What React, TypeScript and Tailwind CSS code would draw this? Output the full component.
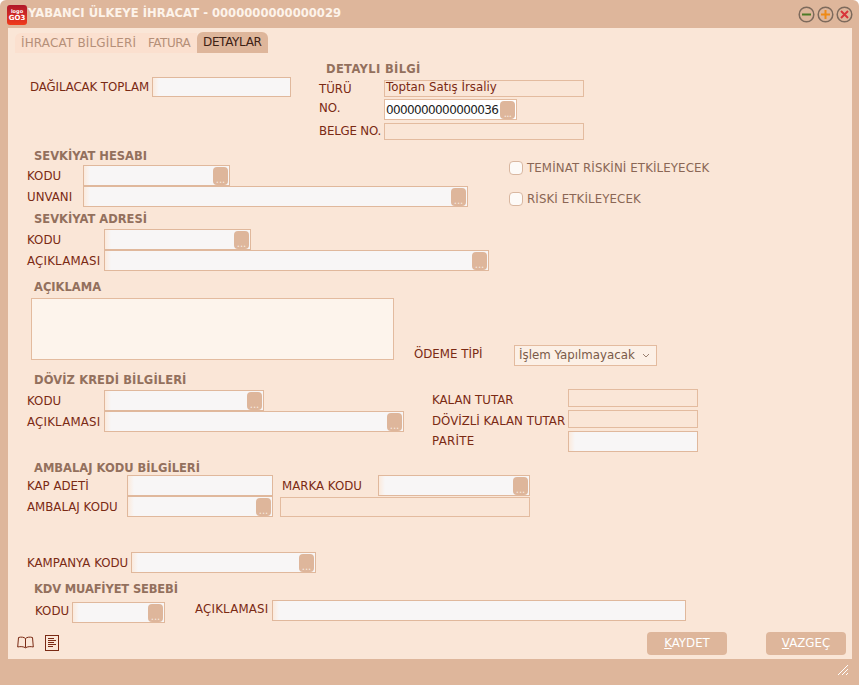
import React from "react";

const label = "text-[#7a2a14] text-[11.8px] leading-[14px] whitespace-nowrap";
const heading = "text-[#93705d] text-[11.5px] leading-[14px] font-bold whitespace-nowrap";
const roBox = "border border-[#e3bb9f] bg-[#fae6d7]";
const edBox = "border border-[#e0b89c] bg-[linear-gradient(to_right,#fbeadd,#f8f6f6_6px)]";

function Dots({ className = "" }: { className?: string }) {
  return (
    <span className={`flex w-[15px] h-[18px] items-end justify-center rounded-[4px] bg-[#deb69b] text-[#f8ebe0] text-[10px] leading-[11px] shrink-0 ${className}`}>
      ...
    </span>
  );
}

function Lookup({ className }: { className: string }) {
  return (
    <div className={`flex items-center justify-end pr-px ${edBox} ${className}`}>
      <Dots />
    </div>
  );
}

function Lbl({ children, className = "" }: { children: React.ReactNode; className?: string }) {
  return <span className={`${label} ${className}`}>{children}</span>;
}

function Head({ children, className = "" }: { children: React.ReactNode; className?: string }) {
  return <div className={`${heading} ${className}`}>{children}</div>;
}

function Check({ children, className = "" }: { children: React.ReactNode; className?: string }) {
  return (
    <div className={`flex items-center gap-[4px] h-[14px] ${className}`}>
      <span className="w-[14px] h-[14px] rounded-[4px] border border-[#d9b7a0] bg-[#fdfaf7]" />
      <Lbl className="text-[#8a6655] tracking-[0.1px]">{children}</Lbl>
    </div>
  );
}

function Circle({ color, kind }: { color: string; kind: "minus" | "plus" | "x" }) {
  return (
    <svg width="17" height="17" viewBox="0 0 17 17">
      <circle cx="8.5" cy="8.5" r="7.3" fill="#deb69b" stroke="#7d6a5c" strokeWidth="1.5" />
      {kind !== "x" && <path d="M4 8.5h9" stroke={color} strokeWidth="2" />}
      {kind === "plus" && <path d="M8.5 4v9" stroke={color} strokeWidth="2" />}
      {kind === "x" && <path d="M5 5l7 7M12 5l-7 7" stroke={color} strokeWidth="2" />}
    </svg>
  );
}

export default function App() {
  return (
    <div className="w-[860px] h-[685px] overflow-hidden bg-white [font-family:'DejaVu_Sans','Liberation_Sans',sans-serif]">
      <div className="relative w-[859px] h-[685px] bg-[#deb69b] rounded-t-[6px] flex flex-col">
        {/* Title bar */}
        <div className="h-[28px] flex items-center shrink-0 pr-[6px]">
          <div className="ml-[7px] w-[20px] h-[20px] mt-[2px] rounded-[3px] bg-gradient-to-b from-[#b0182a] to-[#f03a1a] flex flex-col items-center justify-center text-white font-bold leading-[8px]">
            <span className="text-[5px] leading-[6px]">logo</span>
            <span className="text-[7px] leading-[8px]">GO3</span>
          </div>
          <span className="ml-[1px] text-[#fdf3ea] text-[11.6px] font-bold whitespace-nowrap">YABANCI ÜLKEYE İHRACAT - 0000000000000029</span>
          <div className="ml-auto flex gap-[2px]">
            <Circle color="#4d7a26" kind="minus" />
            <Circle color="#ef8a17" kind="plus" />
            <Circle color="#d8343a" kind="x" />
          </div>
        </div>

        {/* Panel */}
        <div className="ml-[8px] w-[844px] h-[631px] bg-[#fae6d7] flex flex-col">
          {/* Tabs */}
          <div className="flex items-end h-[25px] ml-[7px] shrink-0">
            <span className="h-[20px] w-[125px] pl-[6px] rounded-tl-[6px] bg-[#fbe0cf] text-[#b58f78] text-[12px] tracking-[0.15px] leading-[20px] whitespace-nowrap">İHRACAT BİLGİLERİ</span>
            <span className="h-[20px] w-[57px] pl-[8px] bg-[#fbe0cf] text-[#b58f78] text-[12px] tracking-[-0.5px] leading-[20px]">FATURA</span>
            <span className="h-[21px] w-[71px] pl-[6px] rounded-t-[6px] bg-[#deb69b] text-[#3d2114] text-[12px] tracking-[-0.35px] leading-[20px]">DETAYLAR</span>
          </div>

          {/* Top block */}
          <div className="flex mt-[11px] shrink-0 h-[75px]">
            <div className="flex items-start ml-[22px] w-[289px] pt-[13px]">
              <Lbl className="w-[122px] pt-[3px] tracking-[-0.1px]">DAĞILACAK TOPLAM</Lbl>
              <div className={`w-[139px] h-[20px] ${edBox}`} />
            </div>
            <div className="flex flex-col">
              <Head className="ml-[7px] -mt-[2px] tracking-[0.35px]">DETAYLI BİLGİ</Head>
              <div className="flex items-center mt-[4px] h-[17px] shrink-0">
                <Lbl className="w-[65px]">TÜRÜ</Lbl>
                <div className={`w-[200px] h-[17px] px-[1px] text-[#7a2a14] text-[11.8px] leading-[13px] whitespace-nowrap ${roBox}`}>Toptan Satış İrsaliy</div>
              </div>
              <div className="flex items-center mt-[2px] h-[21px] shrink-0">
                <Lbl className="w-[65px] -mt-[3px]">NO.</Lbl>
                <div className="w-[133px] h-[21px] flex items-center justify-between pl-[1px] pr-px border border-[#e3bb9f] bg-white text-[#222] text-[12px] tracking-[-0.62px]">
                  <span>0000000000000036</span>
                  <Dots />
                </div>
              </div>
              <div className="flex items-center mt-[3px] h-[17px] shrink-0">
                <Lbl className="w-[65px] -mt-[2px] tracking-[-0.2px]">BELGE NO.</Lbl>
                <div className={`w-[200px] h-[17px] ${roBox}`} />
              </div>
            </div>
          </div>

          {/* Sevkiyat block */}
          <div className="flex shrink-0 mt-[10px] h-[122px]">
            <div className="w-[501px]">
              <Head className="ml-[26px]">SEVKİYAT HESABI</Head>
              <div className="flex items-center mt-[2px] ml-[19px] h-[21px]">
                <Lbl className="w-[56px] mt-[1px]">KODU</Lbl>
                <Lookup className="w-[147px] h-[21px]" />
              </div>
              <div className="flex items-center ml-[19px] h-[21px]">
                <Lbl className="w-[56px]">UNVANI</Lbl>
                <Lookup className="w-[385px] h-[21px]" />
              </div>
              <Head className="ml-[26px] mt-[5px]">SEVKİYAT ADRESİ</Head>
              <div className="flex items-center mt-[3px] ml-[19px] h-[21px]">
                <Lbl className="w-[77px]">KODU</Lbl>
                <Lookup className="w-[147px] h-[21px]" />
              </div>
              <div className="flex items-center ml-[19px] h-[21px]">
                <Lbl className="w-[77px] tracking-[0.2px]">AÇIKLAMASI</Lbl>
                <Lookup className="w-[385px] h-[21px]" />
              </div>
            </div>
            <div className="flex flex-col gap-[17px] mt-[12px]">
              <Check>TEMİNAT RİSKİNİ ETKİLEYECEK</Check>
              <Check>RİSKİ ETKİLEYECEK</Check>
            </div>
          </div>

          {/* Açıklama */}
          <Head className="ml-[26px] mt-[9px] shrink-0">AÇIKLAMA</Head>
          <div className="flex shrink-0 mt-[4px] h-[62px]">
            <div className="ml-[23px] w-[363px] h-[62px] border border-[#e3bb9f] bg-[#fdf4ec]" />
            <div className="flex items-start ml-[20px] mt-[47px]">
              <Lbl className="w-[100px] mt-[2px]">ÖDEME TİPİ</Lbl>
              <div className="w-[143px] h-[21px] px-[4px] flex items-center justify-between border border-[#e3bb9f] bg-[#fcf0e6] text-[#7a5a48] text-[11.8px] whitespace-nowrap">
                <span>İşlem Yapılmayacak</span>
                <svg width="8" height="5" viewBox="0 0 8 5" className="mr-[2px]"><path d="M1 1l3 3 3-3" fill="none" stroke="#9a8070" strokeWidth="1" /></svg>
              </div>
            </div>
          </div>

          {/* Döviz */}
          <div className="flex shrink-0 mt-[13px] h-[79px]">
            <div className="w-[424px]">
              <Head className="ml-[26px] tracking-[0.1px]">DÖVİZ KREDİ BİLGİLERİ</Head>
              <div className="flex items-center mt-[3px] ml-[19px] h-[21px]">
                <Lbl className="w-[77px]">KODU</Lbl>
                <Lookup className="w-[160px] h-[21px]" />
              </div>
              <div className="flex items-center ml-[19px] h-[21px]">
                <Lbl className="w-[77px] tracking-[0.2px]">AÇIKLAMASI</Lbl>
                <Lookup className="w-[300px] h-[21px]" />
              </div>
            </div>
            <div className="flex flex-col mt-[16px]">
              <div className="flex items-center h-[18px]">
                <Lbl className="w-[136px] mt-[4px]">KALAN TUTAR</Lbl>
                <div className={`w-[130px] h-[18px] ${roBox}`} />
              </div>
              <div className="flex items-center h-[18px] mt-[3px]">
                <Lbl className="w-[136px] mt-[4px]">DÖVİZLİ KALAN TUTAR</Lbl>
                <div className={`w-[130px] h-[18px] ${roBox}`} />
              </div>
              <div className="flex items-center h-[21px] mt-[3px]">
                <Lbl className="w-[136px] -mt-[2px] tracking-[0.3px]">PARİTE</Lbl>
                <div className={`w-[130px] h-[21px] ${edBox}`} />
              </div>
            </div>
          </div>

          {/* Ambalaj */}
          <Head className="ml-[26px] mt-[9px] shrink-0">AMBALAJ KODU BİLGİLERİ</Head>
          <div className="flex items-center ml-[19px] h-[21px] shrink-0">
            <Lbl className="w-[100px]">KAP ADETİ</Lbl>
            <div className={`w-[146px] h-[21px] ${edBox}`} />
            <Lbl className="ml-[9px] w-[96px]">MARKA KODU</Lbl>
            <Lookup className="w-[152px] h-[21px]" />
          </div>
          <div className="flex items-center ml-[19px] h-[21px] shrink-0">
            <Lbl className="w-[100px]">AMBALAJ KODU</Lbl>
            <Lookup className="w-[146px] h-[21px]" />
            <div className={`ml-[7px] w-[250px] h-[20px] ${roBox}`} />
          </div>

          {/* Kampanya */}
          <div className="flex items-center ml-[19px] mt-[35px] h-[21px] shrink-0">
            <Lbl className="w-[104px]">KAMPANYA KODU</Lbl>
            <Lookup className="w-[185px] h-[21px]" />
          </div>

          {/* KDV */}
          <Head className="ml-[26px] mt-[9px] shrink-0 tracking-[-0.15px]">KDV MUAFİYET SEBEBİ</Head>
          <div className="flex items-start ml-[27px] mt-[5px] shrink-0 h-[23px]">
            <Lbl className="w-[37px] mt-[3px]">KODU</Lbl>
            <Lookup className="w-[93px] h-[21px] mt-[1px]" />
            <Lbl className="ml-[30px] w-[77px] mt-[1px] tracking-[0.2px]">AÇIKLAMASI</Lbl>
            <div className={`w-[414px] h-[21px] -mt-[1px] ${edBox}`} />
          </div>

          {/* Footer */}
          <div className="flex items-center shrink-0 mt-[8px] ml-[9px] h-[23px]">
            <svg width="17" height="13" viewBox="0 0 17 13" className="mb-[3px]" fill="none" stroke="#7a2a14" strokeWidth="1">
              <path d="M8.5 2.5C7 1 4 .8 1.5 1.5L.7 11c2.6-.7 5.8-.5 7.8.8 2-1.3 5.2-1.5 7.8-.8l-.8-9.5C13 .8 10 1 8.5 2.5zM8.5 2.5v9" />
            </svg>
            <svg width="14" height="16" viewBox="0 0 14 16" className="ml-[11px] mb-[1px]" fill="none" stroke="#7a2a14" strokeWidth="1">
              <rect x="0.5" y="0.5" width="13" height="15" />
              <path d="M3 3.5h6M3 5.5h8M3 7.5h6M3 9.5h8M3 11.5h5" />
            </svg>
            <button className="ml-auto w-[80px] h-[23px] rounded-[4px] bg-[#deb69b] text-white text-[11.8px] font-normal leading-[23px]">
              <span className="underline">K</span>AYDET
            </button>
            <button className="ml-[39px] mr-[6px] w-[80px] h-[23px] rounded-[4px] bg-[#deb69b] text-white text-[11.8px] leading-[23px]">
              <span className="underline">V</span>AZGEÇ
            </button>
          </div>
        </div>

        {/* Resize grip */}
        <svg width="12" height="12" viewBox="0 0 12 12" className="absolute right-[10px] bottom-[9px]" stroke="#fff" strokeWidth="1">
          <path d="M1 11L11 1M5 11l6-6M9 11l2-2" />
        </svg>
      </div>
    </div>
  );
}
